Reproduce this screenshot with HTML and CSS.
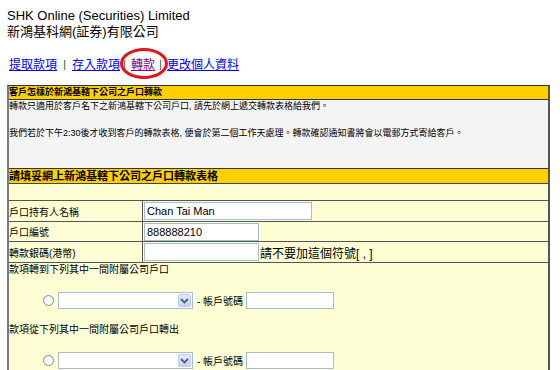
FILE: index.html
```html
<!DOCTYPE html>
<html lang="zh-Hant">
<head>
<meta charset="utf-8">
<title>轉款</title>
<link rel="stylesheet" href="styles.css">
</head>
<body>
<div class="brand">
  <div class="brand-en">SHK Online (Securities) Limited</div>
  <div class="brand-zh">新鴻基科網(証券)有限公司</div>
</div>
<nav class="nav">
  <a class="lnk first" href="#">提取款項</a><span class="sep s1">|</span><a class="lnk" href="#">存入款項</a><span class="sep s2">|</span><a class="lnk visited" href="#">轉款</a><span class="sep s3">|</span><a class="lnk" href="#">更改個人資料</a>
  <span class="mark"></span>
</nav>
<div class="panel">
  <div class="head head1">客戶怎樣於新鴻基轄下公司之戶口轉款</div>
  <div class="info">
    <p>轉款只適用於客戶名下之新鴻基轄下公司戶口, 請先於網上遞交轉款表格給我們。</p>
    <p>我們若於下午2:30後才收到客戶的轉款表格, 便會於第二個工作天處理。轉款確認通知書將會以電郵方式寄給客戶。</p>
  </div>
  <div class="head head2">請填妥網上新鴻基轄下公司之戶口轉款表格</div>
  <div class="blank"></div>
  <div class="row r1">
    <div class="lab">戶口持有人名稱</div>
    <div class="val"><input class="txt wide" type="text" value="Chan Tai Man"></div>
  </div>
  <div class="row r2">
    <div class="lab">戶口編號</div>
    <div class="val"><input class="txt mid" type="text" value="888888210"></div>
  </div>
  <div class="row r3">
    <div class="lab">轉款銀碼(港幣)</div>
    <div class="val"><input class="txt mid" type="text" value=""><span class="hint">請不要加這個符號[ , ]</span></div>
  </div>
  <div class="lower">
    <div class="ltext">款項轉到下列其中一間附屬公司戶口</div>
    <div class="choice">
      <span class="radio"></span>
      <div class="select"><span class="sel-btn"><svg width="9" height="6" viewBox="0 0 9 6"><path d="M1 1 L4.5 4.5 L8 1" fill="none" stroke="#4d6185" stroke-width="1.8"/></svg></span></div>
      <span class="acct">- 帳戶號碼</span>
      <input class="txt small" type="text" value="">
    </div>
    <div class="ltext">款項從下列其中一間附屬公司戶口轉出</div>
    <div class="choice">
      <span class="radio"></span>
      <div class="select"><span class="sel-btn"><svg width="9" height="6" viewBox="0 0 9 6"><path d="M1 1 L4.5 4.5 L8 1" fill="none" stroke="#4d6185" stroke-width="1.8"/></svg></span></div>
      <span class="acct">- 帳戶號碼</span>
      <input class="txt small" type="text" value="">
    </div>
  </div>
</div>
</body>
</html>
```
FILE: styles.css
```css
html, body {
  margin: 0;
  background: #fff;
}
body {
  padding: 8px 7px 0;
  font-family: "Liberation Sans", Arial, "Noto Sans CJK TC", sans-serif;
  font-size: 13px;
  color: #000;
  overflow: hidden;
  height: 362px;
}
.brand {
  line-height: 16px;
}
.nav {
  position: relative;
  display: flex;
  align-items: center;
  margin-top: 17px;
  height: 16px;
  padding-left: 2px;
  font-size: 12px;
  line-height: 16px;
}
.lnk {
  color: #0000ee;
  text-decoration: underline;
}
.lnk.visited {
  color: #800080;
}
.sep {
  display: inline-block;
  width: 3px;
  text-align: center;
  font-size: 10px;
  color: #333;
}
.s1 { margin: 0 6px; }
.s2 { margin: 0 5px 0 3px; }
.s3 { margin: 0 5px 0 4px; }
.mark {
  position: absolute;
  left: 113px;
  top: -9px;
  width: 48px;
  height: 31px;
  box-sizing: border-box;
  border: 3px solid #e3141b;
  border-radius: 50%;
}
.panel {
  margin-top: 12px;
  width: 543px;
  box-sizing: border-box;
  border: 1px solid #333;
  border-left: 2px solid #7a7a7a;
  border-right: 2px solid #555;
}
.head {
  background: #ffcf00;
  font-weight: bold;
}
.head1 {
  height: 13px;
  font-size: 9px;
  line-height: 13px;
  border-bottom: 1px solid #333;
}
.info {
  background: #f4f4f4;
  height: 68px;
  font-size: 9px;
  line-height: 13px;
}
.info p {
  margin: 0;
}
.info p + p {
  margin-top: 14px;
}
.head2 {
  height: 14px;
  font-size: 11px;
  line-height: 14px;
  border-top: 1px solid #333;
  border-bottom: 1px solid #444;
}
.blank {
  height: 16px;
  background: #ffffd6;
  border-bottom: 1px solid #555;
}
.row {
  display: grid;
  grid-template-columns: 134px 1fr;
  background: #ffffd6;
  border-bottom: 1px solid #555;
}
.r1 { height: 20px; }
.r2 { height: 19px; }
.r3 { height: 20px; }
.lab {
  border-right: 1px solid #555;
  font-size: 10px;
  display: flex;
  align-items: center;
}
.val {
  display: flex;
  align-items: center;
  padding-left: 1px;
}
.txt {
  box-sizing: border-box;
  height: 18px;
  margin: 0;
  border: 1px solid #a8bccf;
  padding: 0 2px;
  font-family: "Liberation Sans", Arial, sans-serif;
  font-size: 11px;
  color: #000;
  background: #fff;
  outline: none;
}
.wide { width: 168px; }
.mid { width: 115px; }
.small { width: 88px; height: 17px; }
.hint {
  font-size: 12px;
  margin-left: 1px;
}
.lower {
  background: #ffffd6;
  height: 140px;
  display: flex;
  flex-direction: column;
  font-size: 10px;
}
.ltext {
  line-height: 14px;
  height: 14px;
}
.choice {
  display: flex;
  align-items: center;
  height: 17px;
  margin: 15px 0 14px;
  padding-left: 34px;
}
.radio {
  width: 11px;
  height: 11px;
  box-sizing: border-box;
  border: 1px solid #7f90a8;
  border-radius: 50%;
  background: radial-gradient(circle at 60% 60%, #ffffff 30%, #e2e2e2 100%);
  margin-right: 4px;
}
.select {
  width: 135px;
  height: 17px;
  box-sizing: border-box;
  border: 1px solid #a8bccf;
  background: #fff;
  display: flex;
  justify-content: flex-end;
  align-items: center;
  padding-right: 1px;
}
.sel-btn {
  width: 13px;
  height: 13px;
  box-sizing: border-box;
  border: 1px solid #bccbe9;
  border-radius: 2px;
  background: linear-gradient(#e4ecfb, #c0d2f6);
  display: flex;
  align-items: center;
  justify-content: center;
}
.acct {
  margin: 0 3px 0 4px;
  white-space: nowrap;
}
```
